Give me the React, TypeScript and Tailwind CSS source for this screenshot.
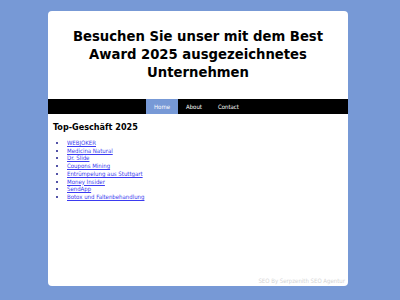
const links = [
  'WEBJOKER',
  'Medicina Natural',
  'Dr. Slide',
  'Coupons Mining',
  'Entrümpelung aus Stuttgart',
  'Money Insider',
  'SendApp',
  'Botox und Faltenbehandlung',
];

export default function App() {
  return (
    <div className="min-h-[300px] w-[400px] bg-[#7799d6] pt-[11px] font-['DejaVu_Sans_Condensed','DejaVu_Sans',sans-serif]">
      <div className="ml-[48px] flex h-[275px] w-[300px] flex-col rounded-[4px] bg-white">
        <header className="px-4 pb-[18px] pt-[16px]">
          <h1 className="text-center text-[14.7px] font-bold leading-[18px] text-black">
            Besuchen Sie unser mit dem Best
            <br />
            Award 2025 ausgezeichnetes
            <br />
            Unternehmen
          </h1>
        </header>
        <nav className="flex h-[15px] justify-center bg-black pr-[3px] text-[6px] text-white">
          <a className="flex items-center bg-[#7799d6] px-[8px]">Home</a>
          <a className="flex items-center px-[8px]">About</a>
          <a className="flex items-center px-[8px]">Contact</a>
        </nav>
        <main className="flex-1 px-[5px] pt-[8px]">
          <h2 className="text-[9px] font-bold leading-[11px] text-black">Top-Geschäft 2025</h2>
          <ul className="mt-[6px] list-disc pl-[14px] text-[6px] leading-[7.7px] marker:text-[#1a1a8a]">
            {links.map(l => (
              <li key={l}>
                <a className="text-[#3b3bf0] underline">{l}</a>
              </li>
            ))}
          </ul>
        </main>
        <footer className="pb-[2px] pr-[3px] text-right text-[6px] leading-[7px] text-[#d4d4d4]">
          SEO By Serpzenith SEO Agentur
        </footer>
      </div>
    </div>
  );
}
